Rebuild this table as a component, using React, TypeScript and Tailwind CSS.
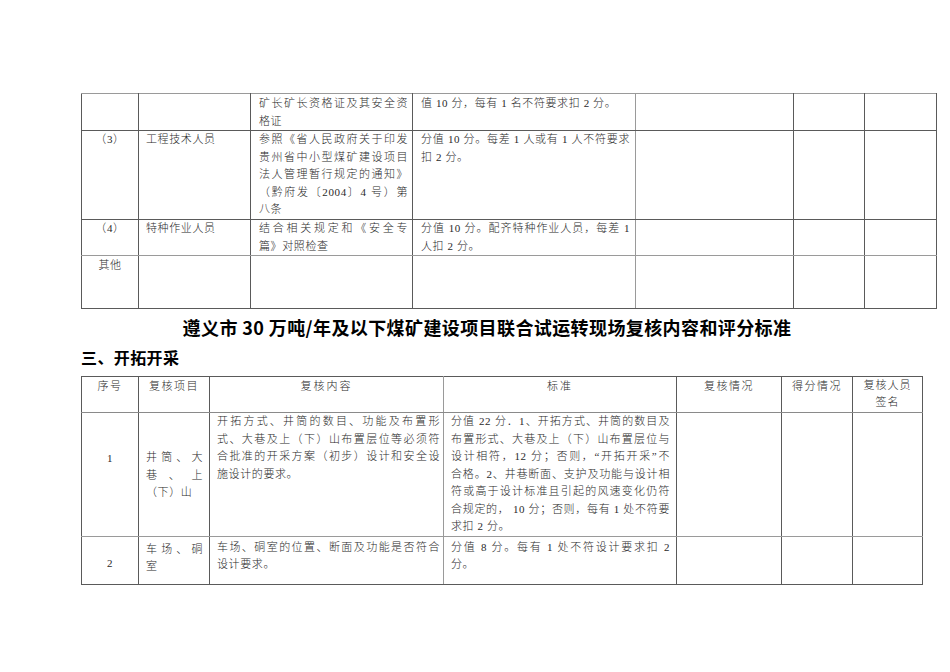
import React from "react";

const BODY_FONT = '"Liberation Serif", "Noto Sans CJK SC", serif';
const CJK_FONT = '"Noto Sans CJK SC", sans-serif';

type CellSpec = {
  lines?: string[];
  align?: "left" | "center";
  cls?: string;
};

function Lines({ lines, align }: { lines: string[]; align: "left" | "center" }) {
  return (
    <>
      {lines.map((l, i) => {
        const last = i === lines.length - 1;
        if (align === "center") {
          return (
            <div key={i} className="text-center">
              {l}
            </div>
          );
        }
        return (
          <div
            key={i}
            className={last ? "text-left" : "text-justify [text-align-last:justify]"}
          >
            {l}
          </div>
        );
      })}
    </>
  );
}

function Cell({ spec }: { spec: CellSpec }) {
  const align = spec.align ?? "left";
  return (
    <td
      className={
        "border border-[#5a5a5a] align-top p-0 " +
        (spec.cls ?? "")
      }
    >
      {spec.lines && spec.lines.length > 0 ? (
        <Lines lines={spec.lines} align={align} />
      ) : null}
    </td>
  );
}

const T1_COLS = [57, 112, 162, 223, 158, 71, 72];
const T2_COLS = [57, 71, 234, 233, 105, 71, 70];

const C1 = "px-[2px]";
const C2 = "pl-[7px] pr-[6px]";
const C3a = "pl-[8px] pr-[4px]";
const C4a = "pl-[8px] pr-[5px]";

const t1Rows: { h: string; cells: CellSpec[] }[] = [
  {
    h: "h-[36px]",
    cells: [
      { cls: "border-t-[#9a9a9a]" },
      { cls: "border-t-[#9a9a9a]" },
      {
        lines: ["矿长矿长资格证及其安全资", "格证"],
        cls: C3a + " pt-[1px] border-t-[#9a9a9a]",
      },
      {
        lines: ["值 10 分，每有 1 名不符要求扣 2 分。"],
        cls: C4a + " pt-[1px] border-t-[#9a9a9a] border-r-[#9a9a9a]",
      },
      { cls: "border-t-[#9a9a9a] border-l-[#9a9a9a]" },
      { cls: "border-t-[#9a9a9a]" },
      { cls: "border-t-[#9a9a9a]" },
    ],
  },
  {
    h: "h-[89px]",
    cells: [
      { lines: ["（3）"], align: "center", cls: C1 },
      { lines: ["工程技术人员"], cls: C2 },
      {
        lines: [
          "参照《省人民政府关于印发",
          "贵州省中小型煤矿建设项目",
          "法人管理暂行规定的通知》",
          "（黔府发〔2004〕4 号）第",
          "八条",
        ],
        cls: C3a,
      },
      {
        lines: ["分值 10 分。每差 1 人或有 1 人不符要求", "扣 2 分。"],
        cls: C4a + " border-r-[#9a9a9a]",
      },
      { cls: "border-l-[#9a9a9a]" },
      {},
      {},
    ],
  },
  {
    h: "h-[35px]",
    cells: [
      { lines: ["（4）"], align: "center", cls: C1 + " border-b-[#9a9a9a]" },
      { lines: ["特种作业人员"], cls: C2 + " border-b-[#9a9a9a]" },
      {
        lines: ["结合相关规定和《安全专", "篇》对照检查"],
        cls: C3a + " border-b-[#9a9a9a]",
      },
      {
        lines: ["分值 10 分。配齐特种作业人员，每差 1", "人扣 2 分。"],
        cls: C4a + " border-b-[#9a9a9a] border-r-[#9a9a9a]",
      },
      { cls: "border-b-[#9a9a9a] border-l-[#9a9a9a]" },
      { cls: "border-b-[#9a9a9a]" },
      { cls: "border-b-[#9a9a9a]" },
    ],
  },
  {
    h: "h-[53px]",
    cells: [
      { lines: ["其他"], align: "center", cls: C1 + " pt-[1px] border-t-[#9a9a9a]" },
      { cls: "border-t-[#9a9a9a]" },
      { cls: "border-t-[#9a9a9a]" },
      { cls: "border-t-[#9a9a9a] border-r-[#9a9a9a]" },
      { cls: "border-t-[#9a9a9a] border-l-[#9a9a9a]" },
      { cls: "border-t-[#9a9a9a]" },
      { cls: "border-t-[#9a9a9a]" },
    ],
  },
];

const C3b = "pl-[7px] pr-[3px]";
const C4b = "pl-[7px] pr-[6px]";

const H = "leading-[17px] border-b-[#8a8a8a]";

const t2Rows: { h: string; cells: CellSpec[] }[] = [
  {
    h: "h-[36px]",
    cells: [
      { lines: ["序号"], align: "center", cls: "tracking-[1.5px] pt-[1px] " + H },
      { lines: ["复核项目"], align: "center", cls: "tracking-[1.5px] pt-[1px] " + H },
      { lines: ["复核内容"], align: "center", cls: "tracking-[2px] pt-[1px] border-r-[#9a9a9a] " + H },
      { lines: ["标准"], align: "center", cls: "tracking-[2px] pt-[1px] border-l-[#9a9a9a] " + H },
      { lines: ["复核情况"], align: "center", cls: "tracking-[1.5px] pt-[1px] " + H },
      { lines: ["得分情况"], align: "center", cls: "tracking-[1.5px] pt-[1px] " + H },
      { lines: ["复核人员", "签名"], align: "center", cls: "tracking-[1px] " + H },
    ],
  },
  {
    h: "h-[123px]",
    cells: [
      { lines: ["1"], align: "center", cls: "pt-[37px] border-b-[#9a9a9a]" },
      {
        lines: ["井筒、大", "巷、上", "（下）山"],
        cls: C2 + " pt-[36px] border-b-[#9a9a9a]",
      },
      {
        lines: [
          "开拓方式、井筒的数目、功能及布置形",
          "式、大巷及上（下）山布置层位等必须符",
          "合批准的开采方案（初步）设计和安全设",
          "施设计的要求。",
        ],
        cls: C3b + " pt-[0px] border-b-[#9a9a9a] border-r-[#9a9a9a]",
      },
      {
        lines: [
          "分值 22 分．1、开拓方式、井筒的数目及",
          "布置形式、大巷及上（下）山布置层位与",
          "设计相符，12 分；否则，“开拓开采”不",
          "合格。2、井巷断面、支护及功能与设计相",
          "符或高于设计标准且引起的风速变化仍符",
          "合规定的， 10 分；否则，每有 1 处不符要",
          "求扣 2 分。",
        ],
        cls: C4b + " pt-[0px] border-b-[#9a9a9a] border-l-[#9a9a9a]",
      },
      { cls: "border-b-[#9a9a9a]" },
      { cls: "border-b-[#9a9a9a]" },
      { cls: "border-b-[#9a9a9a]" },
    ],
  },
  {
    h: "h-[48px]",
    cells: [
      { lines: ["2"], align: "center", cls: "pt-[18px]" },
      { lines: ["车场、硐", "室"], cls: C2 + " pt-[4px]" },
      {
        lines: ["车场、硐室的位置、断面及功能是否符合", "设计要求。"],
        cls: C3b + " pt-[2px] border-r-[#9a9a9a]",
      },
      {
        lines: ["分值 8 分。每有 1 处不符设计要求扣 2", "分。"],
        cls: C4b + " pt-[2px] border-l-[#9a9a9a]",
      },
      {},
      {},
      {},
    ],
  },
];

function DocTable({
  cols,
  rows,
  width,
}: {
  cols: number[];
  rows: { h: string; cells: CellSpec[] }[];
  width: string;
}) {
  return (
    <table className={"border-collapse table-fixed " + width}>
      <colgroup>
        {cols.map((w, i) => (
          <col key={i} style={{ width: w }} />
        ))}
      </colgroup>
      <tbody>
        {rows.map((r, i) => (
          <tr key={i} className={r.h}>
            {r.cells.map((c, j) => (
              <Cell key={j} spec={c} />
            ))}
          </tr>
        ))}
      </tbody>
    </table>
  );
}

export default function App() {
  return (
    <div
      className="w-[950px] h-[672px] overflow-hidden bg-white pl-[81px] pt-[93px] text-[11px] leading-[17.5px] tracking-[0.6px] text-[#2a2a2a] font-light"
      style={{ fontFamily: BODY_FONT }}
    >
      <DocTable cols={T1_COLS} rows={t1Rows} width="w-[855px]" />
      <div
        className="w-[812px] mt-[7px] h-[22px] text-center text-[18px] leading-[22px] font-bold tracking-[0.4px] text-black"
        style={{ fontFamily: CJK_FONT }}
      >
        遵义市 30 万吨/年及以下煤矿建设项目联合试运转现场复核内容和评分标准
      </div>
      <div
        className="mt-[9px] h-[20px] text-[16px] leading-[20px] font-bold tracking-[0.4px] text-black"
        style={{ fontFamily: CJK_FONT }}
      >
        三、开拓开采
      </div>
      <div className="mt-[9px]">
        <DocTable cols={T2_COLS} rows={t2Rows} width="w-[841px]" />
      </div>
    </div>
  );
}
